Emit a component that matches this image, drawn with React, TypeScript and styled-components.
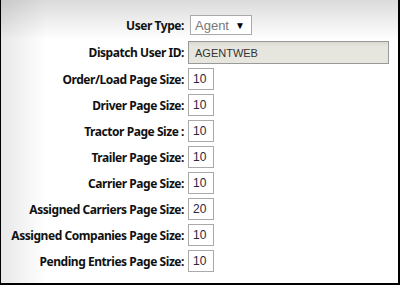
import styled, { createGlobalStyle } from 'styled-components'

const GlobalStyle = createGlobalStyle`
  html, body {
    margin: 0;
    padding: 0;
    background: #fff;
  }
`

const rows = [
	{ label: 'Order/Load Page Size:', value: '10' },
	{ label: 'Driver Page Size:', value: '10' },
	{ label: 'Tractor Page Size :', value: '10' },
	{ label: 'Trailer Page Size:', value: '10' },
	{ label: 'Carrier Page Size:', value: '10' },
	{ label: 'Assigned Carriers Page Size:', value: '20' },
	{ label: 'Assigned Companies Page Size:', value: '10' },
	{ label: 'Pending Entries Page Size:', value: '10' },
]

function App() {
	return (
		<>
			<GlobalStyle />
			<StyledPanel>
				<StyledForm>
					<StyledLabel $top>User Type:</StyledLabel>
					<StyledField $top>
						<StyledSelect>
							<span>Agent</span>
							<StyledArrow>▼</StyledArrow>
						</StyledSelect>
					</StyledField>
					<StyledLabel>Dispatch User ID:</StyledLabel>
					<StyledField>
						<StyledReadOnly readOnly value="AGENTWEB" />
					</StyledField>
					{rows.map((row) => (
						<StyledRow key={row.label}>
							<StyledLabel>{row.label}</StyledLabel>
							<StyledField>
								<StyledSizeInput readOnly value={row.value} />
							</StyledField>
						</StyledRow>
					))}
				</StyledForm>
			</StyledPanel>
		</>
	)
}

const StyledPanel = styled.div`
  box-sizing: border-box;
  width: 400px;
  height: 285px;
  border-left: 1px solid #000;
  border-right: 2px solid #000;
  border-bottom: 2px solid #000;
  background:
    linear-gradient(to bottom, rgba(0, 0, 0, 0.14), rgba(0, 0, 0, 0) 40px),
    linear-gradient(to right, rgba(0, 0, 0, 0.09), rgba(0, 0, 0, 0) 45px),
    #fff;
  padding-top: 15px;
`
const StyledForm = styled.div`
  display: grid;
  grid-template-columns: 183px auto;
  grid-template-rows: 22px 23px;
  grid-auto-rows: 22px;
  row-gap: 4px;
  column-gap: 4px;
`
const StyledRow = styled.div`
  display: contents;
`
const StyledLabel = styled.div<{ $top?: boolean }>`
  display: flex;
  align-items: center;
  justify-content: flex-end;
  padding-bottom: ${(props) => (props.$top ? '2px' : '0')};
  white-space: nowrap;
  font-family: 'Noto Sans', 'Open Sans', sans-serif;
  font-weight: 700;
  font-size: 12px;
  letter-spacing: -0.45px;
  color: #111;
`
const StyledField = styled.div<{ $top?: boolean }>`
  display: flex;
  align-items: ${(props) => (props.$top ? 'flex-start' : 'center')};
`
const StyledSelect = styled.div`
  box-sizing: border-box;
  display: flex;
  align-items: center;
  justify-content: space-between;
  width: 62px;
  height: 20px;
  margin-left: 2px;
  padding: 0 6px 0 4px;
  border: 1px solid #aaa;
  background: #fff;
  font-family: 'Liberation Sans', Arial, sans-serif;
  font-size: 13px;
  color: #777;
`
const StyledArrow = styled.span`
  font-size: 10px;
  color: #000;
`
const StyledReadOnly = styled.input`
  box-sizing: border-box;
  width: 201px;
  height: 23px;
  margin: 0;
  padding: 0 6px;
  border: 1px solid #999;
  background: linear-gradient(to bottom, #d8d8d0, #e6e6de 4px, #e6e6de);
  font-family: 'Liberation Sans', Arial, sans-serif;
  font-size: 11px;
  color: #333;
  outline: none;
`
const StyledSizeInput = styled.input`
  box-sizing: border-box;
  width: 26px;
  height: 22px;
  margin: 0;
  padding: 0 0 0 4px;
  border: 1px solid #aaa;
  background: #fff;
  font-family: 'Liberation Sans', Arial, sans-serif;
  font-size: 12px;
  color: #2b2440;
  outline: none;
`

export default App
